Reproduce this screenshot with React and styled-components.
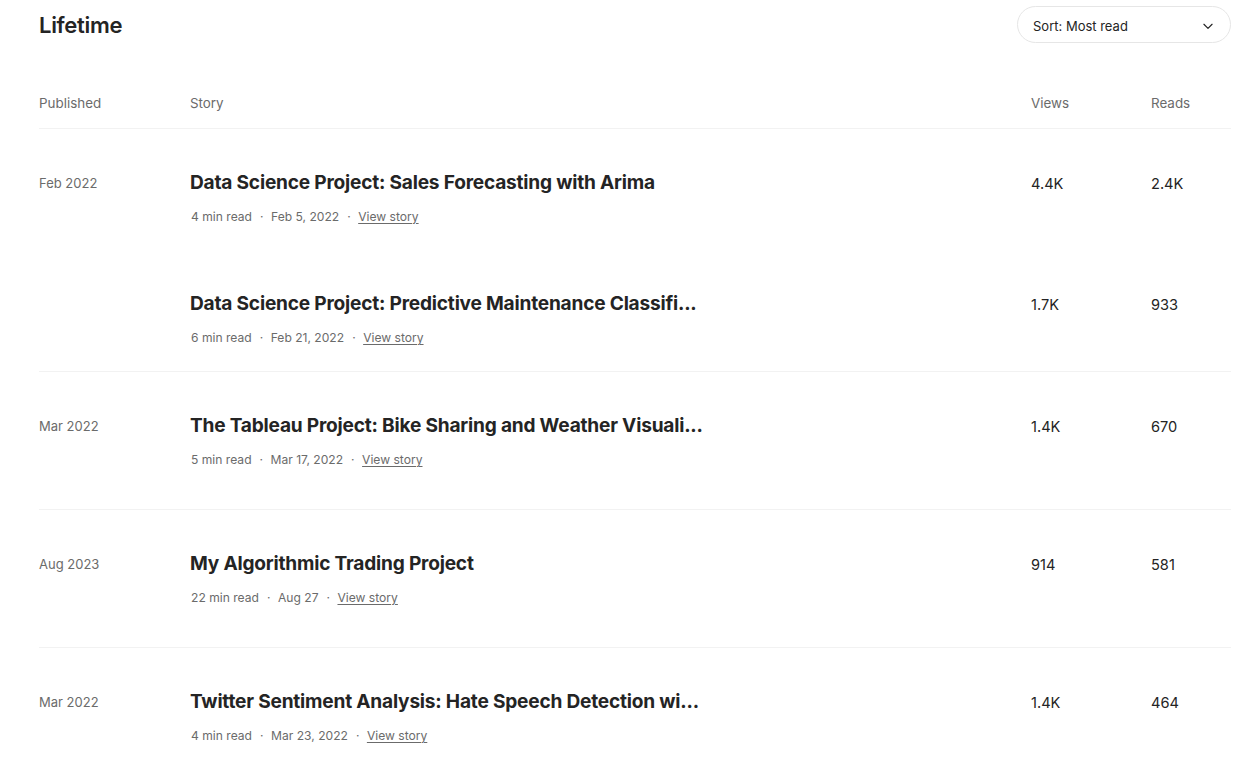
import React from "react";
import styled, { createGlobalStyle } from "styled-components";

const GlobalStyle = createGlobalStyle`
  body {
    margin: 0;
    background: #ffffff;
    font-family: Inter, "Liberation Sans", Arial, sans-serif;
    color: #242424;
  }
`;

const Page = styled.div`
  padding: 0 19px 0 39px;
`;

const TopBar = styled.div`
  display: flex;
  justify-content: space-between;
  align-items: flex-start;
  padding-top: 6px;
  height: 87px;
`;

const Heading = styled.h2`
  margin: 5px 0 0;
  font-size: 22px;
  line-height: 28px;
  font-weight: 600;
  letter-spacing: -0.3px;
  color: #242424;
`;

const SortButton = styled.button`
  display: flex;
  align-items: center;
  justify-content: space-between;
  width: 214px;
  height: 37px;
  padding: 2px 15px 0 15px;
  background: #fff;
  border: 1px solid #e6e6e6;
  border-radius: 20px;
  font-family: inherit;
  font-size: 13px;
  color: #242424;
  cursor: pointer;
`;

const Row = styled.div`
  display: grid;
  grid-template-columns: 151px 1fr 120px 80px;
`;

const HeaderRow = styled(Row)`
  padding-bottom: 15px;
  border-bottom: 1px solid #f2f2f2;
`;

const HeaderCell = styled.div`
  font-size: 13.4px;
  line-height: 20px;
  color: #6b6b6b;
`;

const Group = styled.div`
  padding-bottom: ${(p) => (p.$stacked ? "0" : "16px")};
  border-bottom: 1px solid #f2f2f2;
`;

const StoryRow = styled(Row)`
  padding: 39px 0 24px;
`;

const DateCell = styled.div`
  padding-top: 1px;
  font-size: 13px;
  line-height: 28px;
  color: #6b6b6b;
`;

const StoryCell = styled.div`
  display: flex;
  flex-direction: column;
  gap: 11px;
`;

const StoryTitle = styled.div`
  font-size: 19.1px;
  line-height: 28px;
  font-weight: 700;
  letter-spacing: -0.2px;
  white-space: nowrap;
  color: #242424;
`;

const Meta = styled.div`
  display: flex;
  align-items: center;
  padding-left: 1px;
  font-size: 12.1px;
  line-height: 19px;
  color: #6b6b6b;
`;

const Dot = styled.span`
  margin: 0 7.5px 0 8px;
`;

const ViewLink = styled.a`
  color: #6b6b6b;
  text-decoration: underline;
  text-underline-offset: 2px;
  cursor: pointer;
`;

const Stat = styled.div`
  padding-top: 2px;
  font-size: 14.6px;
  line-height: 28px;
  color: #242424;
`;

const groups = [
  {
    date: "Feb 2022",
    stories: [
      { title: "Data Science Project: Sales Forecasting with Arima", read: "4 min read", day: "Feb 5, 2022", views: "4.4K", reads: "2.4K" },
      { title: "Data Science Project: Predictive Maintenance Classifi...", read: "6 min read", day: "Feb 21, 2022", views: "1.7K", reads: "933" },
    ],
  },
  {
    date: "Mar 2022",
    stories: [
      { title: "The Tableau Project: Bike Sharing and Weather Visuali...", read: "5 min read", day: "Mar 17, 2022", views: "1.4K", reads: "670" },
    ],
  },
  {
    date: "Aug 2023",
    stories: [
      { title: "My Algorithmic Trading Project", read: "22 min read", day: "Aug 27", views: "914", reads: "581" },
    ],
  },
  {
    date: "Mar 2022",
    stories: [
      { title: "Twitter Sentiment Analysis: Hate Speech Detection wi...", read: "4 min read", day: "Mar 23, 2022", views: "1.4K", reads: "464" },
    ],
  },
];

const Chevron = () => (
  <svg width="14" height="14" viewBox="0 0 24 24" fill="none" stroke="#242424" strokeWidth="2" strokeLinecap="round" strokeLinejoin="round">
    <path d="M5 9l7 7 7-7" />
  </svg>
);

const App = () => {
  return (
    <Page>
      <GlobalStyle />
      <TopBar>
        <Heading>Lifetime</Heading>
        <SortButton>
          <span>Sort: Most read</span>
          <Chevron />
        </SortButton>
      </TopBar>
      <HeaderRow>
        <HeaderCell>Published</HeaderCell>
        <HeaderCell>Story</HeaderCell>
        <HeaderCell>Views</HeaderCell>
        <HeaderCell>Reads</HeaderCell>
      </HeaderRow>
      {groups.map((group, gi) => (
        <Group key={gi} $stacked={group.stories.length > 1}>
          {group.stories.map((story, si) => (
            <StoryRow key={si}>
              <DateCell>{si === 0 ? group.date : ""}</DateCell>
              <StoryCell>
                <StoryTitle>{story.title}</StoryTitle>
                <Meta>
                  <span>{story.read}</span>
                  <Dot>·</Dot>
                  <span>{story.day}</span>
                  <Dot>·</Dot>
                  <ViewLink>View story</ViewLink>
                </Meta>
              </StoryCell>
              <Stat>{story.views}</Stat>
              <Stat>{story.reads}</Stat>
            </StoryRow>
          ))}
        </Group>
      ))}
    </Page>
  );
};

export default App;
